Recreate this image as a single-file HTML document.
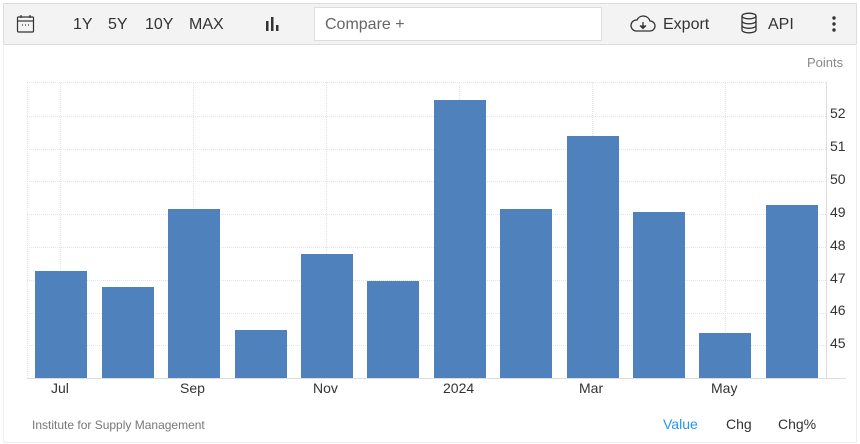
<!DOCTYPE html>
<html><head><style>
body{margin:0;width:860px;height:444px;background:#fff;font-family:"Liberation Sans",sans-serif;position:relative;overflow:hidden}
.tb{position:absolute;left:3px;top:3px;width:852px;height:40px;background:#f3f3f3;border:1px solid #ddd}
.t{position:absolute;font-size:16px;color:#333;top:16px}
.frame{position:absolute;left:3px;top:44px;width:852px;height:398px;border-left:1px solid #eee;border-right:1px solid #eee;border-bottom:1px solid #eee}
.bar{position:absolute;background:#4f81bd;width:52px}
.yl{position:absolute;left:830px;font-size:14px;color:#333}
.xl{position:absolute;top:380px;font-size:14px;color:#333}
.hg{position:absolute;left:27px;width:799px;border-top:1px dotted #e4e4e4}
.vg{position:absolute;top:82px;height:296px;border-left:1px dotted #e4e4e4}
</style></head><body>
<div class="tb"></div>
<svg style="position:absolute;left:16px;top:14px" width="20" height="20" viewBox="0 0 20 20" fill="none" stroke="#333" stroke-width="1.2"><rect x="1.5" y="3" width="16" height="15" rx="1"/><line x1="1.5" y1="7" x2="17.5" y2="7"/><line x1="5" y1="1" x2="5" y2="4"/><line x1="14" y1="1" x2="14" y2="4"/><line x1="6" y1="11" x2="7" y2="11"/><line x1="9" y1="11" x2="10" y2="11"/><line x1="12" y1="11" x2="13" y2="11"/></svg>
<div class="t" style="left:73px">1Y</div>
<div class="t" style="left:108px">5Y</div>
<div class="t" style="left:145px">10Y</div>
<div class="t" style="left:189px">MAX</div>
<svg style="position:absolute;left:265px;top:16px" width="16" height="16" fill="#333"><rect x="1" y="5" width="2.5" height="10"/><rect x="6" y="1" width="2.5" height="14"/><rect x="11" y="9" width="2.5" height="6"/></svg>
<div style="position:absolute;left:314px;top:7px;width:286px;height:32px;background:#fff;border:1px solid #ddd"></div>
<div class="t" style="left:325px;color:#666">Compare +</div>
<svg style="position:absolute;left:629px;top:14px" width="28" height="20" viewBox="0 0 28 20" fill="none" stroke="#333" stroke-width="1.3"><path d="M7 17 H21 A5 5 0 0 0 21 7 A7 7 0 0 0 8 6 A5.5 5.5 0 0 0 7 17 Z"/><line x1="14" y1="8" x2="14" y2="14"/><path d="M11 11.5 L14 14.5 L17 11.5" fill="#333"/></svg>
<div class="t" style="left:663px">Export</div>
<svg style="position:absolute;left:740px;top:12px" width="18" height="22" viewBox="0 0 18 22" fill="none" stroke="#333" stroke-width="1.3"><ellipse cx="9" cy="4" rx="7" ry="2.8"/><path d="M2 4 V18 A7 2.8 0 0 0 16 18 V4"/><path d="M2 9 A7 2.8 0 0 0 16 9"/><path d="M2 13.5 A7 2.8 0 0 0 16 13.5"/></svg>
<div class="t" style="left:768px">API</div>
<svg style="position:absolute;left:831px;top:16px" width="6" height="16" fill="#333"><circle cx="3" cy="2" r="1.7"/><circle cx="3" cy="8" r="1.7"/><circle cx="3" cy="14" r="1.7"/></svg>
<div class="frame"></div>
<div style="position:absolute;left:807px;top:55px;font-size:13px;color:#888">Points</div>
<div class="hg" style="top:82px"></div>
<div class="hg" style="top:116px"></div><div class="hg" style="top:149px"></div><div class="hg" style="top:181px"></div><div class="hg" style="top:214px"></div><div class="hg" style="top:247px"></div><div class="hg" style="top:280px"></div><div class="hg" style="top:313px"></div><div class="hg" style="top:345px"></div>
<div class="vg" style="left:27px"></div><div class="vg" style="left:60px"></div><div class="vg" style="left:193px"></div><div class="vg" style="left:326px"></div><div class="vg" style="left:459px"></div><div class="vg" style="left:592px"></div><div class="vg" style="left:725px"></div>
<div style="position:absolute;left:826px;top:82px;height:296px;border-left:1px solid #ddd"></div>
<div style="position:absolute;left:27px;top:378px;width:819px;border-top:1px solid #ddd"></div>
<div class="bar" style="left:35px;top:271px;height:107px"></div>
<div class="bar" style="left:102px;top:287px;height:91px"></div>
<div class="bar" style="left:168px;top:209px;height:169px"></div>
<div class="bar" style="left:235px;top:330px;height:48px"></div>
<div class="bar" style="left:301px;top:254px;height:124px"></div>
<div class="bar" style="left:367px;top:281px;height:97px"></div>
<div class="bar" style="left:434px;top:100px;height:278px"></div>
<div class="bar" style="left:500px;top:209px;height:169px"></div>
<div class="bar" style="left:567px;top:136px;height:242px"></div>
<div class="bar" style="left:633px;top:212px;height:166px"></div>
<div class="bar" style="left:699px;top:333px;height:45px"></div>
<div class="bar" style="left:766px;top:205px;height:173px"></div>
<div class="yl" style="top:105px">52</div><div class="yl" style="top:138px">51</div><div class="yl" style="top:171px">50</div><div class="yl" style="top:204px">49</div><div class="yl" style="top:237px">48</div><div class="yl" style="top:270px">47</div><div class="yl" style="top:302px">46</div><div class="yl" style="top:335px">45</div>
<div class="xl" style="left:51px">Jul</div><div class="xl" style="left:180px">Sep</div><div class="xl" style="left:313px">Nov</div><div class="xl" style="left:443px">2024</div><div class="xl" style="left:579px">Mar</div><div class="xl" style="left:711px">May</div>
<div style="position:absolute;left:32px;top:418px;font-size:12px;color:#777">Institute for Supply Management</div>
<div style="position:absolute;left:663px;top:416px;font-size:14px;color:#2196f3">Value</div>
<div style="position:absolute;left:726px;top:416px;font-size:14px;color:#333">Chg</div>
<div style="position:absolute;left:778px;top:416px;font-size:14px;color:#333">Chg%</div>
</body></html>
